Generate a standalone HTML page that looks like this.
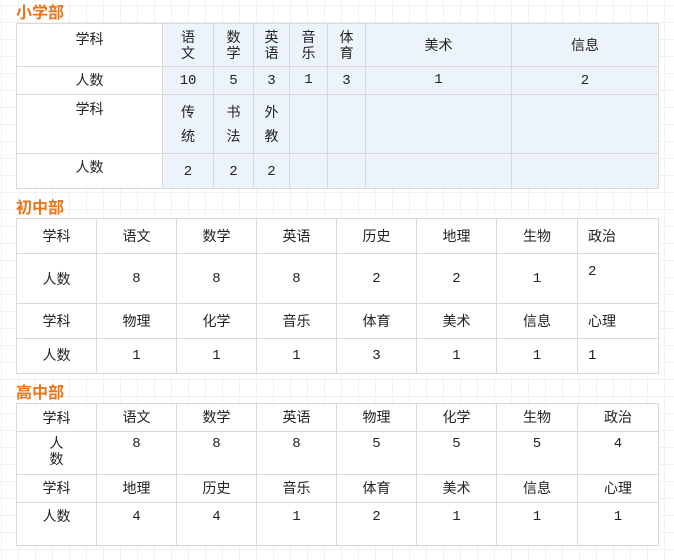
<!DOCTYPE html>
<html><head><meta charset="utf-8"><style>
html,body{margin:0;padding:0}
body{width:674px;height:560px;position:relative;overflow:hidden;background-color:#fff;
background-image:linear-gradient(to right,#f1f1f1 1px,transparent 1px),linear-gradient(to bottom,#f1f1f1 1px,transparent 1px);
background-size:17px 17px;background-position:1px 5px;
font-family:"Liberation Sans","Noto Sans CJK SC",sans-serif;font-size:14px;color:#222}
.h{position:absolute;left:16px;color:#e8761c;font-weight:bold;font-size:16px;line-height:18px;font-family:"Liberation Sans","Noto Sans CJK SC",sans-serif}
.c{position:absolute;box-sizing:border-box;border:1px solid #d9d9d9;text-align:center;line-height:16px;background:#fff}
.b{background:#ecf3fb}
.num{font-family:"Liberation Mono",monospace}
</style></head><body>
<div class="h" style="top:5px">小学部</div>
<div class="h" style="top:200px">初中部</div>
<div class="h" style="top:385px">高中部</div>

<!-- table 1 -->
<div class="c" style="left:16px;top:23px;width:147px;height:44px;padding-top:7px">学科</div>
<div class="c b" style="left:162px;top:23px;width:52px;height:44px;padding-top:5px">语<br>文</div>
<div class="c b" style="left:213px;top:23px;width:41px;height:44px;padding-top:5px">数<br>学</div>
<div class="c b" style="left:253px;top:23px;width:37px;height:44px;padding-top:5px">英<br>语</div>
<div class="c b" style="left:289px;top:23px;width:39px;height:44px;padding-top:5px">音<br>乐</div>
<div class="c b" style="left:327px;top:23px;width:39px;height:44px;padding-top:5px">体<br>育</div>
<div class="c b" style="left:365px;top:23px;width:147px;height:44px;padding-top:13px">美术</div>
<div class="c b" style="left:511px;top:23px;width:148px;height:44px;padding-top:13px">信息</div>

<div class="c" style="left:16px;top:66px;width:147px;height:29px;padding-top:5px">人数</div>
<div class="c b num" style="left:162px;top:66px;width:52px;height:29px;padding-top:6px">10</div>
<div class="c b num" style="left:213px;top:66px;width:41px;height:29px;padding-top:6px">5</div>
<div class="c b num" style="left:253px;top:66px;width:37px;height:29px;padding-top:6px">3</div>
<div class="c b num" style="left:289px;top:66px;width:39px;height:29px;padding-top:5px">1</div>
<div class="c b num" style="left:327px;top:66px;width:39px;height:29px;padding-top:6px">3</div>
<div class="c b num" style="left:365px;top:66px;width:147px;height:29px;padding-top:5px">1</div>
<div class="c b num" style="left:511px;top:66px;width:148px;height:29px;padding-top:6px">2</div>

<div class="c" style="left:16px;top:94px;width:147px;height:60px;padding-top:6px">学科</div>
<div class="c b" style="left:162px;top:94px;width:52px;height:60px;padding-top:5px;line-height:24px">传<br>统</div>
<div class="c b" style="left:213px;top:94px;width:41px;height:60px;padding-top:5px;line-height:24px">书<br>法</div>
<div class="c b" style="left:253px;top:94px;width:37px;height:60px;padding-top:5px;line-height:24px">外<br>教</div>
<div class="c b" style="left:289px;top:94px;width:39px;height:60px"></div>
<div class="c b" style="left:327px;top:94px;width:39px;height:60px"></div>
<div class="c b" style="left:365px;top:94px;width:147px;height:60px"></div>
<div class="c b" style="left:511px;top:94px;width:148px;height:60px"></div>

<div class="c" style="left:16px;top:153px;width:147px;height:36px;padding-top:5px">人数</div>
<div class="c b num" style="left:162px;top:153px;width:52px;height:36px;padding-top:10px">2</div>
<div class="c b num" style="left:213px;top:153px;width:41px;height:36px;padding-top:10px">2</div>
<div class="c b num" style="left:253px;top:153px;width:37px;height:36px;padding-top:10px">2</div>
<div class="c b" style="left:289px;top:153px;width:39px;height:36px"></div>
<div class="c b" style="left:327px;top:153px;width:39px;height:36px"></div>
<div class="c b" style="left:365px;top:153px;width:147px;height:36px"></div>
<div class="c b" style="left:511px;top:153px;width:148px;height:36px"></div>

<!-- table 2 -->
<div class="c" style="left:16px;top:218px;width:81px;height:36px;padding-top:9px">学科</div>
<div class="c" style="left:96px;top:218px;width:81px;height:36px;padding-top:9px">语文</div>
<div class="c" style="left:176px;top:218px;width:81px;height:36px;padding-top:9px">数学</div>
<div class="c" style="left:256px;top:218px;width:81px;height:36px;padding-top:9px">英语</div>
<div class="c" style="left:336px;top:218px;width:81px;height:36px;padding-top:9px">历史</div>
<div class="c" style="left:416px;top:218px;width:81px;height:36px;padding-top:9px">地理</div>
<div class="c" style="left:496px;top:218px;width:82px;height:36px;padding-top:9px">生物</div>
<div class="c" style="left:577px;top:218px;width:82px;height:36px;padding-top:9px;text-align:left;padding-left:10px">政治</div>

<div class="c" style="left:16px;top:253px;width:81px;height:51px;padding-top:17px">人数</div>
<div class="c num" style="left:96px;top:253px;width:81px;height:51px;padding-top:17px">8</div>
<div class="c num" style="left:176px;top:253px;width:81px;height:51px;padding-top:17px">8</div>
<div class="c num" style="left:256px;top:253px;width:81px;height:51px;padding-top:17px">8</div>
<div class="c num" style="left:336px;top:253px;width:81px;height:51px;padding-top:17px">2</div>
<div class="c num" style="left:416px;top:253px;width:81px;height:51px;padding-top:17px">2</div>
<div class="c num" style="left:496px;top:253px;width:82px;height:51px;padding-top:17px">1</div>
<div class="c num" style="left:577px;top:253px;width:82px;height:51px;padding-top:10px;text-align:left;padding-left:10px">2</div>

<div class="c" style="left:16px;top:303px;width:81px;height:36px;padding-top:9px">学科</div>
<div class="c" style="left:96px;top:303px;width:81px;height:36px;padding-top:9px">物理</div>
<div class="c" style="left:176px;top:303px;width:81px;height:36px;padding-top:9px">化学</div>
<div class="c" style="left:256px;top:303px;width:81px;height:36px;padding-top:9px">音乐</div>
<div class="c" style="left:336px;top:303px;width:81px;height:36px;padding-top:9px">体育</div>
<div class="c" style="left:416px;top:303px;width:81px;height:36px;padding-top:9px">美术</div>
<div class="c" style="left:496px;top:303px;width:82px;height:36px;padding-top:9px">信息</div>
<div class="c" style="left:577px;top:303px;width:82px;height:36px;padding-top:9px;text-align:left;padding-left:10px">心理</div>

<div class="c" style="left:16px;top:338px;width:81px;height:36px;padding-top:8px">人数</div>
<div class="c num" style="left:96px;top:338px;width:81px;height:36px;padding-top:9px">1</div>
<div class="c num" style="left:176px;top:338px;width:81px;height:36px;padding-top:9px">1</div>
<div class="c num" style="left:256px;top:338px;width:81px;height:36px;padding-top:9px">1</div>
<div class="c num" style="left:336px;top:338px;width:81px;height:36px;padding-top:9px">3</div>
<div class="c num" style="left:416px;top:338px;width:81px;height:36px;padding-top:9px">1</div>
<div class="c num" style="left:496px;top:338px;width:82px;height:36px;padding-top:9px">1</div>
<div class="c num" style="left:577px;top:338px;width:82px;height:36px;padding-top:9px;text-align:left;padding-left:10px">1</div>

<!-- table 3 -->
<div class="c" style="left:16px;top:403px;width:81px;height:29px;padding-top:6px">学科</div>
<div class="c" style="left:96px;top:403px;width:81px;height:29px;padding-top:5px">语文</div>
<div class="c" style="left:176px;top:403px;width:81px;height:29px;padding-top:5px">数学</div>
<div class="c" style="left:256px;top:403px;width:81px;height:29px;padding-top:5px">英语</div>
<div class="c" style="left:336px;top:403px;width:81px;height:29px;padding-top:5px">物理</div>
<div class="c" style="left:416px;top:403px;width:81px;height:29px;padding-top:5px">化学</div>
<div class="c" style="left:496px;top:403px;width:82px;height:29px;padding-top:5px">生物</div>
<div class="c" style="left:577px;top:403px;width:82px;height:29px;padding-top:5px">政治</div>

<div class="c" style="left:16px;top:431px;width:81px;height:44px;padding-top:3px">人<br>数</div>
<div class="c num" style="left:96px;top:431px;width:81px;height:44px;padding-top:4px">8</div>
<div class="c num" style="left:176px;top:431px;width:81px;height:44px;padding-top:4px">8</div>
<div class="c num" style="left:256px;top:431px;width:81px;height:44px;padding-top:4px">8</div>
<div class="c num" style="left:336px;top:431px;width:81px;height:44px;padding-top:4px">5</div>
<div class="c num" style="left:416px;top:431px;width:81px;height:44px;padding-top:4px">5</div>
<div class="c num" style="left:496px;top:431px;width:82px;height:44px;padding-top:4px">5</div>
<div class="c num" style="left:577px;top:431px;width:82px;height:44px;padding-top:4px">4</div>

<div class="c" style="left:16px;top:474px;width:81px;height:29px;padding-top:5px">学科</div>
<div class="c" style="left:96px;top:474px;width:81px;height:29px;padding-top:5px">地理</div>
<div class="c" style="left:176px;top:474px;width:81px;height:29px;padding-top:5px">历史</div>
<div class="c" style="left:256px;top:474px;width:81px;height:29px;padding-top:5px">音乐</div>
<div class="c" style="left:336px;top:474px;width:81px;height:29px;padding-top:5px">体育</div>
<div class="c" style="left:416px;top:474px;width:81px;height:29px;padding-top:5px">美术</div>
<div class="c" style="left:496px;top:474px;width:82px;height:29px;padding-top:5px">信息</div>
<div class="c" style="left:577px;top:474px;width:82px;height:29px;padding-top:5px">心理</div>

<div class="c" style="left:16px;top:502px;width:81px;height:44px;padding-top:5px">人数</div>
<div class="c num" style="left:96px;top:502px;width:81px;height:44px;padding-top:6px">4</div>
<div class="c num" style="left:176px;top:502px;width:81px;height:44px;padding-top:6px">4</div>
<div class="c num" style="left:256px;top:502px;width:81px;height:44px;padding-top:6px">1</div>
<div class="c num" style="left:336px;top:502px;width:81px;height:44px;padding-top:6px">2</div>
<div class="c num" style="left:416px;top:502px;width:81px;height:44px;padding-top:6px">1</div>
<div class="c num" style="left:496px;top:502px;width:82px;height:44px;padding-top:6px">1</div>
<div class="c num" style="left:577px;top:502px;width:82px;height:44px;padding-top:6px">1</div>
</body></html>
